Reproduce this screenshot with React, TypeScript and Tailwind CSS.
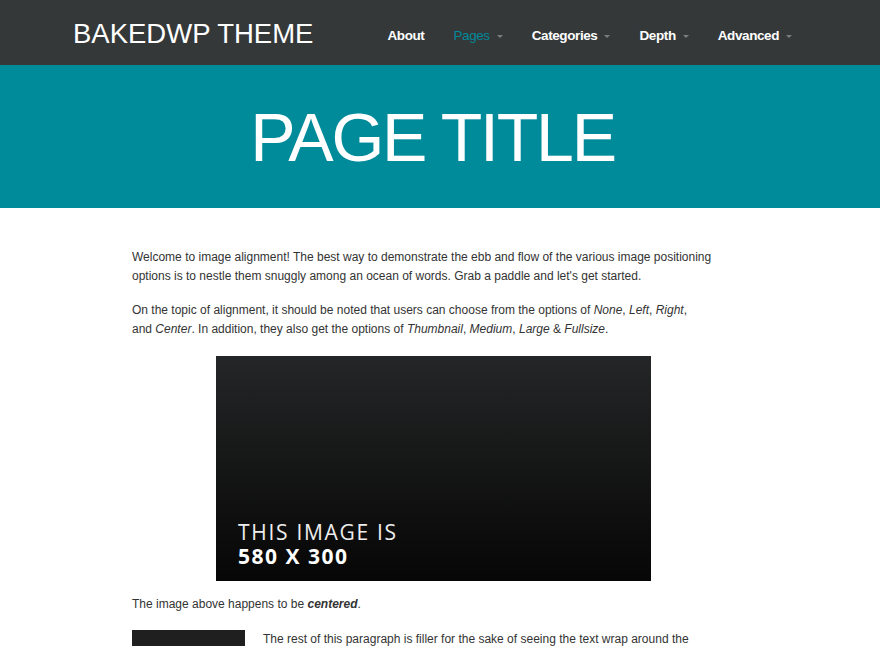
import React from 'react';

const navItems = [
  { label: 'About', active: false, caret: false },
  { label: 'Pages', active: true, caret: true },
  { label: 'Categories', active: false, caret: true },
  { label: 'Depth', active: false, caret: true },
  { label: 'Advanced', active: false, caret: true },
];

function Caret() {
  return (
    <span className="ml-[7px] inline-block h-0 w-0 border-x-[3px] border-t-[3px] border-x-transparent border-t-[#7a7e7f]" />
  );
}

export default function App() {
  return (
    <div className="min-h-[660px] bg-white font-['Liberation_Sans',Arial,sans-serif] text-[#333]">
      <header className="h-[65px] bg-[#343839]">
        <div className="flex h-full items-center pt-[2px] pl-[73px]">
          <div className="text-[27.5px] leading-none text-white">BAKEDWP THEME</div>
          <nav className="ml-[74px] flex items-center gap-[29px] pt-[5px]">
            {navItems.map(item => (
              <a
                key={item.label}
                className={`flex items-center text-[13.5px] font-bold tracking-[-0.4px] ${item.active ? 'font-normal text-[#00899a]' : 'text-white'}`}
              >
                {item.label}
                {item.caret && <Caret />}
              </a>
            ))}
          </nav>
        </div>
      </header>

      <section className="flex h-[143px] items-center justify-center bg-[#008b9b]">
        <h1 className="pr-[15px] text-[68px] leading-none font-normal tracking-[-2.2px] text-white">PAGE TITLE</h1>
      </section>

      <main className="pt-[40px] pl-[132px]">
        <div className="w-[603px] text-[12px] leading-[19px]">
          <p className="mb-[15px]">
            Welcome to image alignment! The best way to demonstrate the ebb and flow of the various image positioning
            options is to nestle them snuggly among an ocean of words. Grab a paddle and let's get started.
          </p>
          <p>
            On the topic of alignment, it should be noted that users can choose from the options of <em>None</em>,{' '}
            <em>Left</em>, <em>Right</em>,<br />
            and <em>Center</em>. In addition, they also get the options of <em>Thumbnail</em>, <em>Medium</em>,{' '}
            <em>Large</em> &amp; <em>Fullsize</em>.
          </p>

          <div className="mx-auto mt-[17px] flex h-[225px] w-[435px] flex-col justify-end bg-gradient-to-b from-[#252627] to-[#070707] pb-[13px] pl-[22px] font-['Open_Sans',sans-serif] text-white">
            <div className="text-[21px] leading-[24px] tracking-[1.7px] text-[#eee]">THIS IMAGE IS</div>
            <div className="text-[21px] leading-[24px] font-bold tracking-[1.5px]">580 X 300</div>
          </div>

          <p className="mt-[14px]">
            The image above happens to be <em className="font-bold">centered</em>.
          </p>

          <div className="mt-[15px]">
            <div className="float-left mt-[6px] mr-[18px] h-[16px] w-[113px] bg-[#1f1f1f]" />
            <p className="-mt-[5px] leading-[30px]">
              The rest of this paragraph is filler for the sake of seeing the text wrap around the 150x150 image, which is
              left aligned.
            </p>
          </div>
        </div>
      </main>
    </div>
  );
}
